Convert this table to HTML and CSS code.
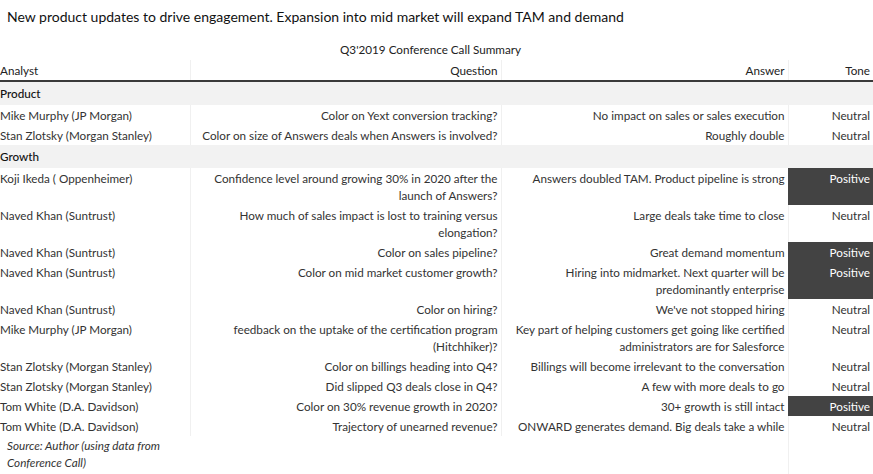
FILE: index.html
```html
<!DOCTYPE html>
<html>
<head>
<meta charset="utf-8">
<link rel="stylesheet" href="styles.css">
</head>
<body>
<div class="title">New product updates to drive engagement. Expansion into mid market will expand TAM and demand</div>
<div class="subtitle">Q3'2019 Conference Call Summary</div>
<table class="summary">
  <colgroup>
    <col class="c-analyst"><col class="c-question"><col class="c-answer"><col class="c-tone">
  </colgroup>
  <thead>
    <tr class="head">
      <th class="analyst">Analyst</th><th class="sep">Question</th><th class="sep">Answer</th><th class="sep">Tone</th>
    </tr>
  </thead>
  <tbody>
    <tr class="section"><td colspan="4">Product</td></tr>
    <tr><td class="analyst">Mike Murphy (JP Morgan)</td><td class="sep">Color on Yext conversion tracking?</td><td class="sep">No impact on sales or sales execution</td><td class="sep">Neutral</td></tr>
    <tr><td class="analyst">Stan Zlotsky (Morgan Stanley)</td><td class="sep">Color on size of Answers deals when Answers is involved?</td><td class="sep">Roughly double</td><td class="sep">Neutral</td></tr>
    <tr class="section"><td colspan="4">Growth</td></tr>
    <tr><td class="analyst">Koji Ikeda ( Oppenheimer)</td><td class="sep">Confidence level around growing 30% in 2020 after the<br>launch of Answers?</td><td class="sep">Answers doubled TAM. Product pipeline is strong</td><td class="sep pos">Positive</td></tr>
    <tr><td class="analyst">Naved Khan (Suntrust)</td><td class="sep">How much of sales impact is lost to training versus<br>elongation?</td><td class="sep">Large deals take time to close</td><td class="sep">Neutral</td></tr>
    <tr><td class="analyst">Naved Khan (Suntrust)</td><td class="sep">Color on sales pipeline?</td><td class="sep">Great demand momentum</td><td class="sep pos">Positive</td></tr>
    <tr><td class="analyst">Naved Khan (Suntrust)</td><td class="sep">Color on mid market customer growth?</td><td class="sep">Hiring into midmarket. Next quarter will be<br>predominantly enterprise</td><td class="sep pos">Positive</td></tr>
    <tr><td class="analyst">Naved Khan (Suntrust)</td><td class="sep">Color on hiring?</td><td class="sep">We've not stopped hiring</td><td class="sep">Neutral</td></tr>
    <tr><td class="analyst">Mike Murphy (JP Morgan)</td><td class="sep">feedback on the uptake of the certification program<br>(Hitchhiker)?</td><td class="sep">Key part of helping customers get going like certified<br>administrators are for Salesforce</td><td class="sep">Neutral</td></tr>
    <tr><td class="analyst">Stan Zlotsky (Morgan Stanley)</td><td class="sep">Color on billings heading into Q4?</td><td class="sep">Billings will become irrelevant to the conversation</td><td class="sep">Neutral</td></tr>
    <tr><td class="analyst">Stan Zlotsky (Morgan Stanley)</td><td class="sep">Did slipped Q3 deals close in Q4?</td><td class="sep">A few with more deals to go</td><td class="sep">Neutral</td></tr>
    <tr><td class="analyst">Tom White (D.A. Davidson)</td><td class="sep">Color on 30% revenue growth in 2020?</td><td class="sep">30+ growth is still intact</td><td class="sep pos">Positive</td></tr>
    <tr><td class="analyst">Tom White (D.A. Davidson)</td><td class="sep">Trajectory of unearned revenue?</td><td class="sep">ONWARD generates demand. Big deals take a while</td><td class="sep">Neutral</td></tr>
    <tr class="source"><td colspan="3"><div class="source-text">Source: Author (using data from<br>Conference Call)</div></td><td class="sep"></td></tr>
  </tbody>
</table>
</body>
</html>
```
FILE: styles.css
```css
html, body {
  margin: 0;
  padding: 0;
  background: #fff;
}
body {
  font-family: Lato, "Open Sans", sans-serif;
  font-size: 11.7px;
  color: #333;
  width: 873px;
  height: 474px;
  overflow: hidden;
}
.title {
  font-size: 14px;
  color: #111;
  padding: 7px 0 0 7px;
  height: 33px;
  line-height: 19px;
  box-sizing: border-box;
}
.subtitle {
  text-align: center;
  padding-right: 12px;
  line-height: 17px;
  height: 27px;
  padding-top: 8px;
  box-sizing: border-box;
  color: #222;
}
.summary {
  border-collapse: collapse;
  width: 873px;
  table-layout: fixed;
}
.c-analyst { width: 190px; }
.c-question { width: 311px; }
.c-answer { width: 287px; }
.c-tone { width: 85px; }
.summary th,
.summary td {
  text-align: right;
  vertical-align: top;
  line-height: 17px;
  padding: 2px 3px 1px 0;
  font-weight: normal;
  white-space: nowrap;
}
.summary .analyst {
  text-align: left;
  padding-left: 0;
}
.summary .sep {
  border-left: 1px solid #f0f0f0;
}
.head th {
  color: #222;
  border-bottom: 2px solid #3a3a3a;
}
.section td {
  background: #f2f2f2;
  text-align: left;
  color: #111;
  font-weight: 500;
  padding: 3px 0 3px 0;
}
.summary td.pos {
  background: #434343;
  color: #fff;
  border-left-color: #434343;
}
.source td {
  height: 38px;
  padding: 0;
}
.source-text {
  font-style: italic;
  text-align: left;
  padding: 1px 0 0 7px;
  line-height: 17px;
}
```
